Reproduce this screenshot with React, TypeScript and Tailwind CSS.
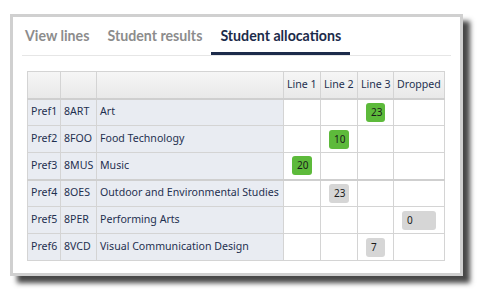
const rows = [
  { pref: "Pref1", code: "8ART", name: "Art", col: 2, value: "23", green: true },
  { pref: "Pref2", code: "8FOO", name: "Food Technology", col: 1, value: "10", green: true },
  { pref: "Pref3", code: "8MUS", name: "Music", col: 0, value: "20", green: true },
  { pref: "Pref4", code: "8OES", name: "Outdoor and Environmental Studies", col: 1, value: "23", green: false },
  { pref: "Pref5", code: "8PER", name: "Performing Arts", col: 3, value: "0", green: false },
  { pref: "Pref6", code: "8VCD", name: "Visual Communication Design", col: 2, value: "7", green: false },
];

const headers = ["Line 1", "Line 2", "Line 3", "Dropped"];

export default function App() {
  return (
    <div className="w-[479px] h-[289px] bg-white pt-[14px] pl-[10px]" style={{ fontFamily: '"Noto Sans", "Open Sans", sans-serif' }}>
      <div className="w-[453px] h-[262px] border-[3px] border-[#d0d0d0] bg-white shadow-[7px_7px_5px_rgba(0,0,0,0.72)]">
        {/* Tabs */}
        <div className="flex h-[38px] pl-[3px] font-['Lato',sans-serif]">
          <div className="px-[9px] flex items-center text-[14.2px] font-bold text-[#8c8c8c]">View lines</div>
          <div className="px-[9px] flex items-center text-[14.2px] font-bold text-[#8c8c8c]">Student results</div>
          <div className="px-[9px] flex items-center text-[14.2px] font-bold text-[#1c2b4a] border-b-[3px] border-[#1c2b4a] pt-[3px]">
            Student allocations
          </div>
        </div>
        <div className="mx-[9px] h-px bg-[#e6e6e6]" />

        {/* Table */}
        <div className="mt-[15px] ml-[14px]">
          <table className="w-[417px] table-fixed border-collapse text-[10.6px] text-[#1f3050]">
            <colgroup>
              <col className="w-[33px]" />
              <col className="w-[36px]" />
              <col className="w-[187px]" />
              <col className="w-[37px]" />
              <col className="w-[37px]" />
              <col className="w-[36px]" />
              <col className="w-[51px]" />
            </colgroup>
            <thead>
              <tr className="h-[27px] bg-gradient-to-b from-[#f6f6f6] to-[#e8e8e8]">
                <th className="border border-[#d4d4d4] border-b-2 border-b-[#cfcfcf]" />
                <th className="border border-[#d4d4d4] border-b-2 border-b-[#cfcfcf]" />
                <th className="border border-[#d4d4d4] border-b-2 border-b-[#cfcfcf]" />
                {headers.map((h) => (
                  <th key={h} className="border border-[#d4d4d4] border-b-2 border-b-[#cfcfcf] px-[3px] text-left font-normal whitespace-nowrap">
                    {h}
                  </th>
                ))}
              </tr>
            </thead>
            <tbody>
              {rows.map((r, i) => {
                const sep = i === 2 ? "border-b-2 border-b-[#cfcfcf]" : "";
                return (
                  <tr key={r.pref} className="h-[27px]">
                    <td className={`border border-[#d4d4d4] bg-[#e9ecf2] px-[3px] whitespace-nowrap ${sep}`}>{r.pref}</td>
                    <td className={`border border-[#d4d4d4] bg-[#e9ecf2] px-[3px] whitespace-nowrap ${sep}`}>{r.code}</td>
                    <td className={`border border-[#d4d4d4] bg-[#e9ecf2] px-[3px] whitespace-nowrap ${sep}`}>{r.name}</td>
                    {headers.map((h, c) => (
                      <td key={h} className={`border border-[#d4d4d4] bg-white px-[8px] ${sep}`}>
                        {c === r.col && (
                          <div
                            className={`h-[19px] rounded-[3px] pl-[5px] flex items-center text-[10px] text-[#1a1a1a] ${
                              r.green ? "bg-[#5dba3b]" : "bg-[#d6d6d6]"
                            }`}
                          >
                            {r.value}
                          </div>
                        )}
                      </td>
                    ))}
                  </tr>
                );
              })}
            </tbody>
          </table>
        </div>
      </div>
    </div>
  );
}
